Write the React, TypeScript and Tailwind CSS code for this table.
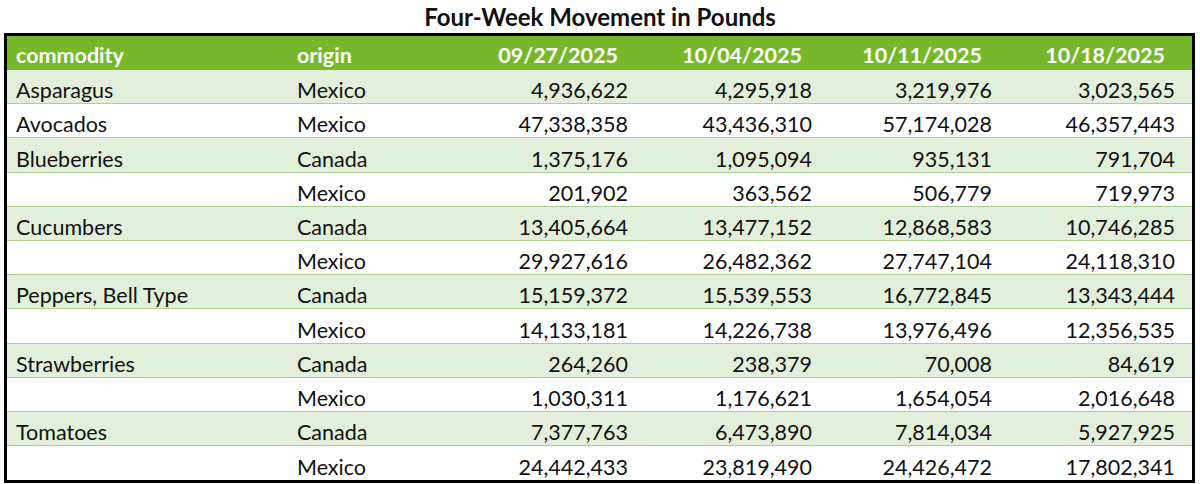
const dates = ["09/27/2025", "10/04/2025", "10/11/2025", "10/18/2025"];

const rows: [string, string, string[]][] = [
  ["Asparagus", "Mexico", ["4,936,622", "4,295,918", "3,219,976", "3,023,565"]],
  ["Avocados", "Mexico", ["47,338,358", "43,436,310", "57,174,028", "46,357,443"]],
  ["Blueberries", "Canada", ["1,375,176", "1,095,094", "935,131", "791,704"]],
  ["", "Mexico", ["201,902", "363,562", "506,779", "719,973"]],
  ["Cucumbers", "Canada", ["13,405,664", "13,477,152", "12,868,583", "10,746,285"]],
  ["", "Mexico", ["29,927,616", "26,482,362", "27,747,104", "24,118,310"]],
  ["Peppers, Bell Type", "Canada", ["15,159,372", "15,539,553", "16,772,845", "13,343,444"]],
  ["", "Mexico", ["14,133,181", "14,226,738", "13,976,496", "12,356,535"]],
  ["Strawberries", "Canada", ["264,260", "238,379", "70,008", "84,619"]],
  ["", "Mexico", ["1,030,311", "1,176,621", "1,654,054", "2,016,648"]],
  ["Tomatoes", "Canada", ["7,377,763", "6,473,890", "7,814,034", "5,927,925"]],
  ["", "Mexico", ["24,442,433", "23,819,490", "24,426,472", "17,802,341"]],
];

const cols = "grid grid-cols-[289px_170px_172px_184px_180px_1fr]";

export default function App() {
  return (
    <div className="h-[484px] w-[1200px] bg-white font-['Lato',sans-serif] text-[#111]">
      <h1 className="flex h-[33px] items-center justify-center pt-[1px] text-[24px] font-bold">
        Four-Week Movement in Pounds
      </h1>
      <div className="mx-[4px] w-[1191px] border-[3px] border-black">
        <div className={`${cols} h-[34px] items-end bg-[#77b82a] pb-[2px] text-[21.5px] leading-[26px] font-bold text-white`}>
          <div className="pl-[9px]">commodity</div>
          <div className="pl-[1px]">origin</div>
          {dates.map((d, i) => (
            <div key={d} className={`text-right ${i === 3 ? "pr-[27px]" : "pr-[20px]"}`}>
              {d}
            </div>
          ))}
        </div>
        {rows.map(([name, origin, vals], r) => (
          <div
            key={r}
            className={`${cols} h-[34.2px] items-end text-[21.5px] leading-[26px] ${
              r % 2 === 0 ? "bg-[#e2efda]" : "bg-white"
            } ${r < rows.length - 1 ? "border-b border-[#a9d08e]" : ""}`}
          >
            <div className="pl-[9px]">{name}</div>
            <div className="pl-[1px]">{origin}</div>
            {vals.map((v, i) => (
              <div key={i} className={`text-right ${i === 3 ? "pr-[17px]" : "pr-[10px]"}`}>
                {v}
              </div>
            ))}
          </div>
        ))}
      </div>
    </div>
  );
}
